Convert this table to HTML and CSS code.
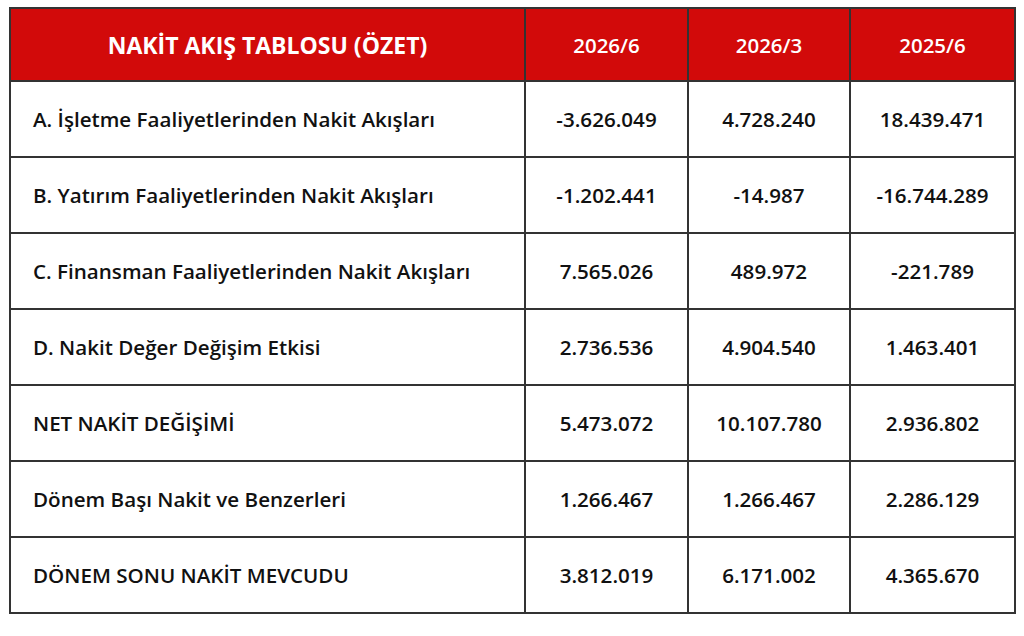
FILE: index.html
```html
<!DOCTYPE html>
<html lang="tr">
<head>
<meta charset="utf-8">
<link rel="stylesheet" href="styles.css">
</head>
<body>
<table class="cf">
  <colgroup>
    <col class="c-label"><col class="c-num"><col class="c-num2"><col class="c-num3">
  </colgroup>
  <thead>
    <tr><th class="title">NAKİT AKIŞ TABLOSU (ÖZET)</th><th class="yr">2026/6</th><th class="yr">2026/3</th><th class="yr">2025/6</th></tr>
  </thead>
  <tbody>
    <tr><td>A. İşletme Faaliyetlerinden Nakit Akışları</td><td>-3.626.049</td><td>4.728.240</td><td>18.439.471</td></tr>
    <tr><td>B. Yatırım Faaliyetlerinden Nakit Akışları</td><td>-1.202.441</td><td>-14.987</td><td>-16.744.289</td></tr>
    <tr><td>C. Finansman Faaliyetlerinden Nakit Akışları</td><td>7.565.026</td><td>489.972</td><td>-221.789</td></tr>
    <tr><td>D. Nakit Değer Değişim Etkisi</td><td>2.736.536</td><td>4.904.540</td><td>1.463.401</td></tr>
    <tr><td>NET NAKİT DEĞİŞİMİ</td><td>5.473.072</td><td>10.107.780</td><td>2.936.802</td></tr>
    <tr><td>Dönem Başı Nakit ve Benzerleri</td><td>1.266.467</td><td>1.266.467</td><td>2.286.129</td></tr>
    <tr><td>DÖNEM SONU NAKİT MEVCUDU</td><td>3.812.019</td><td>6.171.002</td><td>4.365.670</td></tr>
  </tbody>
</table>
</body>
</html>
```
FILE: styles.css
```css
html, body { margin: 0; padding: 0; background: #fff; }
body { padding: 7px 10px 0 9px; font-family: "Open Sans", "Noto Sans", sans-serif; color: #111; }
.cf { border-collapse: collapse; width: 1005px; table-layout: fixed; }
.c-label { width: 515px; }
.c-num { width: 163px; }
.c-num2 { width: 162px; }
.c-num3 { width: 165px; }
.cf th, .cf td { border: 2px solid #333; padding: 0; }
.cf th {
  background: #d20a0a; color: #fff; height: 71px; text-align: center;
}
.cf th.title { font-weight: 700; font-size: 23px; }
.cf th.yr { font-weight: 600; font-size: 20.5px; }
.cf td { height: 74px; font-size: 20.6px; font-weight: 600; text-align: center; }
.cf td:first-child { text-align: left; padding-left: 22px; }
```
